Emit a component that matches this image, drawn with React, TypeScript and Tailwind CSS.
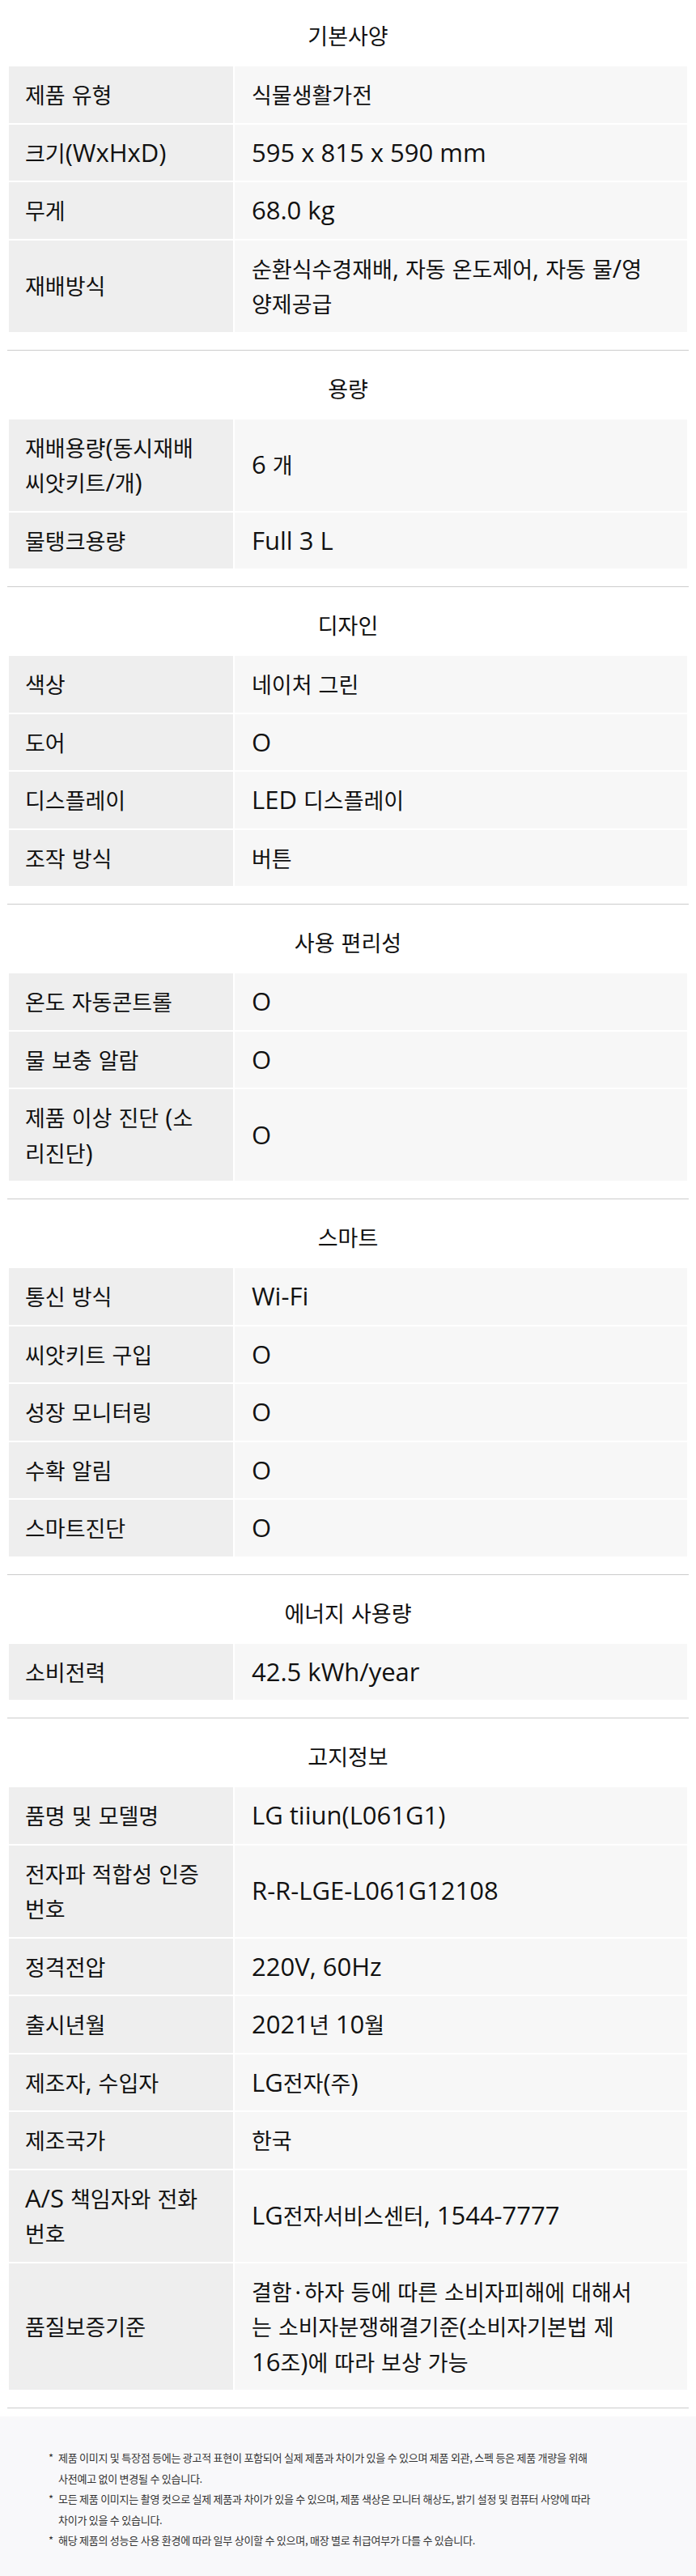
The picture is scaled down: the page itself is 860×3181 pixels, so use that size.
import React from "react";

type Row = [string[], string[]];
type Section = { title: string; rows: Row[] };

const sections: Section[] = [
  {
    title: "기본사양",
    rows: [
      [["제품 유형"], ["식물생활가전"]],
      [["크기(WxHxD)"], ["595 x 815 x 590 mm"]],
      [["무게"], ["68.0 kg"]],
      [["재배방식"], ["순환식수경재배, 자동 온도제어, 자동 물/영", "양제공급"]],
    ],
  },
  {
    title: "용량",
    rows: [
      [["재배용량(동시재배", "씨앗키트/개)"], ["6 개"]],
      [["물탱크용량"], ["Full 3 L"]],
    ],
  },
  {
    title: "디자인",
    rows: [
      [["색상"], ["네이처 그린"]],
      [["도어"], ["O"]],
      [["디스플레이"], ["LED 디스플레이"]],
      [["조작 방식"], ["버튼"]],
    ],
  },
  {
    title: "사용 편리성",
    rows: [
      [["온도 자동콘트롤"], ["O"]],
      [["물 보충 알람"], ["O"]],
      [["제품 이상 진단 (소", "리진단)"], ["O"]],
    ],
  },
  {
    title: "스마트",
    rows: [
      [["통신 방식"], ["Wi-Fi"]],
      [["씨앗키트 구입"], ["O"]],
      [["성장 모니터링"], ["O"]],
      [["수확 알림"], ["O"]],
      [["스마트진단"], ["O"]],
    ],
  },
  {
    title: "에너지 사용량",
    rows: [[["소비전력"], ["42.5 kWh/year"]]],
  },
  {
    title: "고지정보",
    rows: [
      [["품명 및 모델명"], ["LG tiiun(L061G1)"]],
      [["전자파 적합성 인증", "번호"], ["R-R-LGE-L061G12108"]],
      [["정격전압"], ["220V, 60Hz"]],
      [["출시년월"], ["2021년 10월"]],
      [["제조자, 수입자"], ["LG전자(주)"]],
      [["제조국가"], ["한국"]],
      [["A/S 책임자와 전화", "번호"], ["LG전자서비스센터, 1544-7777"]],
      [
        ["품질보증기준"],
        [
          "결함·하자 등에 따른 소비자피해에 대해서",
          "는 소비자분쟁해결기준(소비자기본법 제",
          "16조)에 따라 보상 가능",
        ],
      ],
    ],
  },
];

function Mixed({ text }: { text: string }) {
  const parts = text.split(/([\x20-\x7E]+)/);
  return (
    <>
      {parts.map((p, i) =>
        p === "" ? null : /^[\x20-\x7E]+$/.test(p) ? (
          <span
            key={i}
            className="font-['Open_Sans','Noto_Sans_CJK_KR',sans-serif] text-[31px] leading-none whitespace-pre"
          >
            {p}
          </span>
        ) : (
          <span key={i}>{p}</span>
        )
      )}
    </>
  );
}

function Lines({ lines }: { lines: string[] }) {
  return (
    <div className="whitespace-nowrap">
      {lines.map((l, i) => (
        <React.Fragment key={i}>
          {i > 0 && <br />}
          <Mixed text={l} />
        </React.Fragment>
      ))}
    </div>
  );
}

function SpecSection({ s, first }: { s: Section; first: boolean }) {
  return (
    <section
      className={`mx-[9px] border-b border-[#cccccc] pb-[22px] ${first ? "pt-[21px]" : "pt-[24px]"}`}
    >
      <h2 className="text-center text-[27px] leading-[45px] font-normal text-[#111111] mb-[16px]">
        <Mixed text={s.title} />
      </h2>
      <div className="flex flex-col gap-[2px] ml-[2px] mr-[2px]">
        {s.rows.map((r, i) => (
          <div key={i} className="grid grid-cols-[277px_1fr] gap-x-[2px]">
            <div className="bg-[#eeeeee] flex items-center pl-[20px] pr-[10px] py-[13px]">
              <Lines lines={r[0]} />
            </div>
            <div className="bg-[#f7f7f7] flex items-center pl-[21px] pr-[10px] py-[13px]">
              <Lines lines={r[1]} />
            </div>
          </div>
        ))}
      </div>
    </section>
  );
}

const notes: string[][] = [
  [
    "제품 이미지 및 특장점 등에는 광고적 표현이 포함되어 실제 제품과 차이가 있을 수 있으며 제품 외관, 스펙 등은 제품 개량을 위해",
    "사전예고 없이 변경될 수 있습니다.",
  ],
  [
    "모든 제품 이미지는 촬영 컷으로 실제 제품과 차이가 있을 수 있으며, 제품 색상은 모니터 해상도, 밝기 설정 및 컴퓨터 사양에 따라",
    "차이가 있을 수 있습니다.",
  ],
  ["해당 제품의 성능은 사용 환경에 따라 일부 상이할 수 있으며, 매장 별로 취급여부가 다를 수 있습니다."],
];

export default function App() {
  return (
    <div className="w-[860px] bg-white text-[#111111] font-['Noto_Sans_CJK_KR',sans-serif] text-[27px] leading-[43.5px]">
      {sections.map((s, i) => (
        <SpecSection key={i} s={s} first={i === 0} />
      ))}
      <footer className="mt-[10px] bg-[#f8f8fa] pl-[60px] pr-[20px] pt-[38px] pb-[31px] text-[13px] leading-[25.5px] tracking-[-0.25px] text-[#333333] font-['Noto_Sans_CJK_KR',sans-serif]">
        <ul className="flex flex-col">
          {notes.map((n, i) => (
            <li key={i} className="flex">
              <span className="w-[12px] shrink-0">*</span>
              <div className="whitespace-nowrap">
                {n.map((l, j) => (
                  <React.Fragment key={j}>
                    {j > 0 && <br />}
                    {l}
                  </React.Fragment>
                ))}
              </div>
            </li>
          ))}
        </ul>
      </footer>
    </div>
  );
}
